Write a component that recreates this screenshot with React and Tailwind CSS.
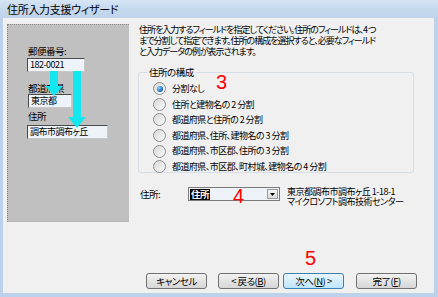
import React from "react";

const radioItems = [
    "分割なし",
    "住所と建物名の 2 分割",
    "都道府県と住所の 2 分割",
    "都道府県、住所、建物名の 3 分割",
    "都道府県、市区郡、住所の 3 分割",
    "都道府県、市区郡、町村城、建物名の 4 分割",
];

function Radio({ checked }) {
    return (
        <span className="w-[13px] h-[13px] rounded-full border border-[#8f8f8f] bg-gradient-to-br from-[#d6d6d6] to-[#fbfbfb] flex items-center justify-center shrink-0">
            {checked && (
                <span className="w-[6px] h-[6px] rounded-full bg-[radial-gradient(circle_at_35%_35%,#8fd0ff,#1d6fc0_60%,#0c4a8c)]" />
            )}
        </span>
    );
}

function Field({ width, children }) {
    return (
        <div
            className={`h-[14px] ${width} bg-[#eef2f9] border border-t-[#4a4a4a] border-l-[#4a4a4a] border-r-[#c8c8c8] border-b-[#c8c8c8] pl-[2px] text-[9px] leading-[12px] whitespace-nowrap`}
        >
            {children}
        </div>
    );
}

function WizButton({ children, focused }) {
    return (
        <button
            className={`relative w-[61px] h-[16px] rounded-[3px] border text-[9.5px] leading-[14px] flex items-center justify-center ${focused ? "border-[#3c7fb1] bg-gradient-to-b from-[#eaf6fd] to-[#bee6fd]" : "border-[#707070] bg-gradient-to-b from-[#f2f2f2] to-[#d6d6d6]"}`}
        >
            {children}
        </button>
    );
}

function Arrows() {
    return (
        <svg
            className="absolute left-0 top-0 pointer-events-none"
            width="122"
            height="198"
            viewBox="0 0 122 198"
        >
            <path d="M42 46 H50 V61 H55 L46 71 L37 61 H42 Z" fill="#12e6ef" />
            <path d="M65 46 H73 V92 H78 L69 103 L60 92 H65 Z" fill="#12e6ef" />
        </svg>
    );
}

export default function App() {
    return (
        <div className="w-[438px] h-[297px] bg-[#bcd2ea] flex flex-col overflow-hidden text-black text-[9.5px] tracking-[-0.5px] font-['Noto_Sans_CJK_JP','Noto_Sans',sans-serif] [font-feature-settings:'palt']">
            <div className="h-[18px] shrink-0 pl-[7px] flex items-center text-[11px] tracking-[-0.3px] bg-gradient-to-b from-[#d6e5f4] via-[#c5d9ee] to-[#bfd4eb]">
                住所入力支援ウィザード
            </div>
            <div className="flex-1 ml-[3px] mr-[4px] mb-[4px] bg-[#f0f0f0] flex flex-col">
                <div className="flex pt-[6px] pl-[4px]">
                    {/* left image panel */}
                    <div className="relative w-[122px] h-[198px] shrink-0 bg-[#c0c0c0] border-l border-t border-[#8a8a8a] border-b-[#b0b0b0] border-b border-dotted border-r-0 pl-[20px] pt-[20px] flex flex-col leading-[12px]">
                        <span>郵便番号:</span>
                        <div className="mt-[1px] -ml-[1px]">
                            <Field width="w-[58px]">182-0021</Field>
                        </div>
                        <span className="mt-[10px]">都道府県</span>
                        <Field width="w-[44px]">東京都</Field>
                        <span className="mt-[2px]">住所</span>
                        <div className="mt-[3px] -ml-[1px]">
                            <Field width="w-[81px]">調布市調布ヶ丘</Field>
                        </div>
                        <Arrows />
                    </div>

                    {/* right side */}
                    <div className="ml-[10px] w-[278px] flex flex-col">
                        <p className="text-[9px] tracking-[-1px] leading-[11px] whitespace-nowrap">
                            住所を入力するフィールドを指定してください。住所のフィールドは、4 つ
                            <br />
                            まで分割して指定できます。住所の構成を選択すると、必要なフィールド
                            <br />
                            と入力データの例が表示されます。
                        </p>

                        <div className="relative mt-[15px] ml-[-1px] w-[276px] h-[101px] rounded-[3px] border border-[#d5dde6] pt-[8px] pl-[14px]">
                            <span className="absolute left-[8px] top-[-7px] px-[2px] bg-[#f0f0f0] leading-[12px]">
                                住所の構成
                            </span>
                            <span className="absolute left-[77px] top-[-1px] text-[20px] leading-[20px] tracking-normal text-[#ff0000] font-['Liberation_Sans',sans-serif]">
                                3
                            </span>
                            {radioItems.map((label, i) => (
                                <div
                                    key={label}
                                    className="h-[15.6px] flex items-center gap-[6px] whitespace-nowrap text-[9px] tracking-[-0.55px]"
                                >
                                    <Radio checked={i === 0} />
                                    <span>{label}</span>
                                </div>
                            ))}
                        </div>

                        <div className="mt-[14px] flex items-start">
                            <span className="ml-[1px] w-[48px] leading-[14px]">
                                住所:
                            </span>
                            <div className="relative w-[92px] h-[14px] border border-[#7a7a7a] bg-[#eef3fa] flex items-center">
                                <span className="ml-[1px] px-[1px] bg-black text-white leading-[11px] font-bold">
                                    住所
                                </span>
                                <span className="absolute left-[44px] top-[-2px] text-[20px] leading-[20px] tracking-normal text-[#ff0000] font-['Liberation_Sans',sans-serif]">
                                    4
                                </span>
                                <span className="ml-auto mr-[1px] w-[11px] h-[10px] border border-[#9a9a9a] bg-gradient-to-b from-[#f4f4f4] to-[#dcdcdc] flex items-center justify-center">
                                    <svg width="5" height="3" viewBox="0 0 5 3">
                                        <path d="M0 0 H5 L2.5 3 Z" fill="#000" />
                                    </svg>
                                </span>
                            </div>
                            <div className="ml-[7px] text-[9px] leading-[10px] whitespace-nowrap">
                                東京都調布市調布ヶ丘 1-18-1
                                <br />
                                マイクロソフト調布技術センター
                            </div>
                        </div>
                    </div>
                </div>

                <div className="mt-auto mb-[4px] pl-[143px] flex items-center">
                    <WizButton>キャンセル</WizButton>
                    <div className="ml-[11px]">
                        <WizButton>
                            &lt; 戻る(<span className="underline">B</span>)
                        </WizButton>
                    </div>
                    <div className="ml-[4px] relative">
                        <span className="absolute left-[22px] top-[-25px] text-[20px] leading-[20px] tracking-normal text-[#ff0000] font-['Liberation_Sans',sans-serif]">
                            5
                        </span>
                        <WizButton focused>
                            次へ(<span className="underline">N</span>) &gt;
                        </WizButton>
                    </div>
                    <div className="ml-[12px]">
                        <WizButton>
                            完了(<span className="underline">F</span>)
                        </WizButton>
                    </div>
                </div>
            </div>
        </div>
    );
}
